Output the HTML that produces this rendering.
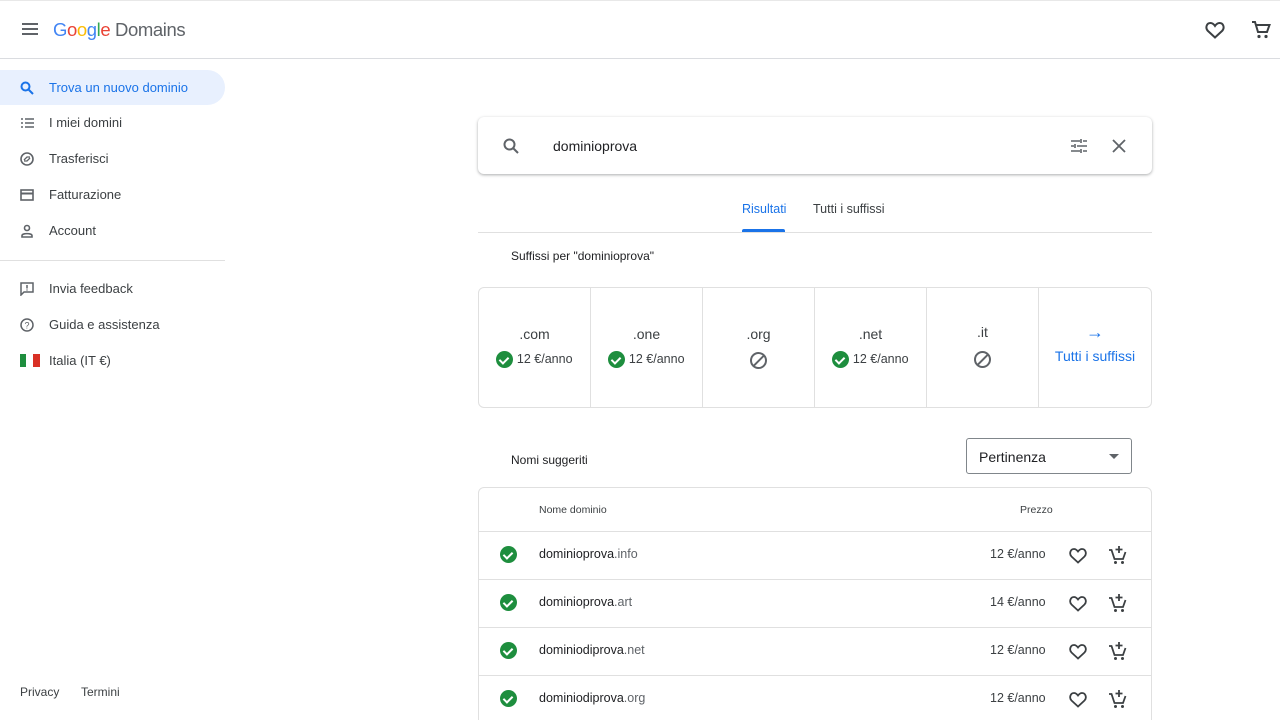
<!DOCTYPE html>
<html><head><meta charset="utf-8"><style>
*{box-sizing:border-box;margin:0;padding:0}
html,body{width:1280px;height:720px;overflow:hidden}
body{background:#fff;font-family:"Liberation Sans",sans-serif;color:#3c4043;position:relative}
.abs{position:absolute}
.hdr{left:0;top:0;width:1280px;height:59px;border-bottom:1px solid #dadce0;border-top:1px solid #e8e8e8}
.nav{left:0;width:225px;height:35px;font-size:13px;display:flex;align-items:center;padding-left:20px}
.nav svg{margin-right:15px}
.tld{position:absolute;top:0;height:119px;width:112px;border-right:1px solid #e0e0e0;text-align:center;font-size:14px}
.row{left:479px;width:672px;height:48px;border-top:1px solid #e0e0e0;font-size:12.5px}
.ok{display:inline-block;width:17px;height:17px;border-radius:50%;background:#1e8e3e;vertical-align:middle;position:relative}
.ok:after{content:"";position:absolute;left:5px;top:3.5px;width:4px;height:7px;border:solid #fff;border-width:0 2px 2px 0;transform:rotate(45deg)}
.no{display:inline-block;width:17px;height:17px;border:2px solid #5f6368;border-radius:50%;position:relative}
.no:after{content:"";position:absolute;left:5.5px;top:-1px;width:2px;height:15px;background:#5f6368;transform:rotate(45deg)}
</style></head><body>
<div class="abs hdr"></div>
<svg class="abs" style="left:21px;top:22px" width="18" height="14"><path d="M1 2h16M1 7h16M1 12h16" stroke="#5f6368" stroke-width="2"/></svg>
<div class="abs" style="left:53px;top:19px;font-size:18.5px;letter-spacing:-.4px"><span style="color:#4285f4">G</span><span style="color:#ea4335">o</span><span style="color:#fbbc05">o</span><span style="color:#4285f4">g</span><span style="color:#34a853">l</span><span style="color:#ea4335">e</span> <span style="color:#5f6368">Domains</span></div>
<svg class="abs" style="left:1205px;top:21px" width="20" height="18"><path d="M10 16.5L3 10C0 7 1.5 2 5.5 2c2 0 3.5 1.5 4.5 3 1-1.5 2.5-3 4.5-3 4 0 5.5 5 2.5 8z" fill="none" stroke="#3c4043" stroke-width="2"/></svg>
<svg class="abs" style="left:1251px;top:20px" width="20" height="20"><path d="M1 2h3l3 10h9l2.5-7H5.5" fill="none" stroke="#3c4043" stroke-width="2"/><circle cx="8" cy="16.5" r="1.6" fill="#3c4043"/><circle cx="15" cy="16.5" r="1.6" fill="#3c4043"/></svg>

<div class="abs" style="left:0;top:70px;width:225px;height:35px;background:#e8f0fe;border-radius:0 18px 18px 0"></div>
<div class="abs nav" style="top:70px;color:#1a73e8"><svg width="14" height="14"><circle cx="5.5" cy="5.5" r="4" fill="none" stroke="#1a73e8" stroke-width="2"/><path d="M8.5 8.5L13 13" stroke="#1a73e8" stroke-width="2"/></svg>Trova un nuovo dominio</div>
<div class="abs nav" style="top:105px"><svg width="14" height="14"><path d="M1 3h2M5 3h9M1 7h2M5 7h9M1 11h2M5 11h9" stroke="#5f6368" stroke-width="1.6"/></svg>I miei domini</div>
<div class="abs nav" style="top:141px"><svg width="14" height="14"><circle cx="7" cy="7" r="6" fill="none" stroke="#5f6368" stroke-width="1.6"/><path d="M4 8l3-3h3M10 6l-3 3H4" stroke="#5f6368" stroke-width="1.3" fill="none"/></svg>Trasferisci</div>
<div class="abs nav" style="top:177px"><svg width="14" height="14"><rect x="1" y="2" width="12" height="10" fill="none" stroke="#5f6368" stroke-width="1.6"/><path d="M1 5.5h12" stroke="#5f6368" stroke-width="2"/></svg>Fatturazione</div>
<div class="abs nav" style="top:213px"><svg width="14" height="14"><circle cx="7" cy="4" r="2.5" fill="none" stroke="#5f6368" stroke-width="1.6"/><path d="M2 13v-1.5C2 9 12 9 12 11.5V13z" fill="none" stroke="#5f6368" stroke-width="1.6"/></svg>Account</div>
<div class="abs" style="left:0;top:260px;width:225px;border-top:1px solid #e0e0e0"></div>
<div class="abs nav" style="top:271px"><svg width="14" height="14"><path d="M1 1h12v9H4l-3 3z" fill="none" stroke="#5f6368" stroke-width="1.5"/><path d="M7 3v3.5M7 7.5v1" stroke="#5f6368" stroke-width="1.5"/></svg>Invia feedback</div>
<div class="abs nav" style="top:307px"><svg width="14" height="14"><circle cx="7" cy="7" r="6" fill="none" stroke="#5f6368" stroke-width="1.5"/><text x="7" y="10.5" font-size="9" text-anchor="middle" fill="#5f6368" font-family="Liberation Sans">?</text></svg>Guida e assistenza</div>
<div class="abs nav" style="top:343px"><svg width="20" height="13" style="margin-right:9px"><rect width="6" height="13" fill="#1e8e3e"/><rect x="13" width="7" height="13" fill="#d93025"/></svg>Italia (IT €)</div>
<div class="abs" style="left:20px;top:685px;font-size:12px">Privacy</div>
<div class="abs" style="left:81px;top:685px;font-size:12px">Termini</div>

<div class="abs" style="left:478px;top:117px;width:674px;height:57px;border-radius:6px;box-shadow:0 1px 3px rgba(60,64,67,.3),0 1px 2px rgba(60,64,67,.15)"></div>
<svg class="abs" style="left:503px;top:138px" width="16" height="16"><circle cx="6.5" cy="6.5" r="5" fill="none" stroke="#5f6368" stroke-width="2"/><path d="M10 10l5 5" stroke="#5f6368" stroke-width="2"/></svg>
<div class="abs" style="left:553px;top:138px;font-size:14px;color:#202124">dominioprova</div>
<svg class="abs" style="left:1070px;top:138px" width="18" height="16"><path d="M1 3h9M13 3h4M1 8h3M7 8h10M1 13h9M13 13h4M11 1v4M5 6v4M11 11v4" stroke="#5f6368" stroke-width="1.6"/></svg>
<svg class="abs" style="left:1112px;top:139px" width="14" height="14"><path d="M1 1l12 12M13 1L1 13" stroke="#5f6368" stroke-width="1.8"/></svg>

<div class="abs" style="left:742px;top:202px;font-size:12.5px;color:#1a73e8">Risultati</div>
<div class="abs" style="left:742px;top:229px;width:43px;height:3px;background:#1a73e8;border-radius:2px 2px 0 0"></div>
<div class="abs" style="left:813px;top:202px;font-size:12.5px">Tutti i suffissi</div>
<div class="abs" style="left:478px;top:232px;width:674px;border-top:1px solid #e0e0e0"></div>
<div class="abs" style="left:511px;top:249px;font-size:12px;color:#202124">Suffissi per "dominioprova"</div>

<div class="abs" style="left:478px;top:287px;width:674px;height:121px;border:1px solid #e0e0e0;border-radius:6px;overflow:hidden">
<div class="tld" style="left:0"><div style="margin-top:38px">.com</div><div style="margin-top:9px;font-size:12.5px"><span class="ok"></span> 12 €/anno</div></div>
<div class="tld" style="left:112px"><div style="margin-top:38px">.one</div><div style="margin-top:9px;font-size:12.5px"><span class="ok"></span> 12 €/anno</div></div>
<div class="tld" style="left:224px"><div style="margin-top:38px">.org</div><div style="margin-top:10px"><span class="no"></span></div></div>
<div class="tld" style="left:336px"><div style="margin-top:38px">.net</div><div style="margin-top:9px;font-size:12.5px"><span class="ok"></span> 12 €/anno</div></div>
<div class="tld" style="left:448px"><div style="margin-top:36px">.it</div><div style="margin-top:11px"><span class="no"></span></div></div>
<div class="tld" style="left:560px;border:0;color:#1a73e8"><div style="margin-top:34px;font-size:18px">→</div><div style="margin-top:5px">Tutti i suffissi</div></div>
</div>

<div class="abs" style="left:511px;top:453px;font-size:12px;color:#202124">Nomi suggeriti</div>
<div class="abs" style="left:966px;top:438px;width:166px;height:36px;border:1px solid #80868b;border-radius:3px;font-size:14px;padding:10px 12px;color:#202124">Pertinenza</div>
<svg class="abs" style="left:1109px;top:454px" width="10" height="5"><path d="M0 0h10L5 5z" fill="#5f6368"/></svg>

<div class="abs" style="left:478px;top:487px;width:674px;height:260px;border:1px solid #e0e0e0;border-radius:6px"></div>
<div class="abs" style="left:539px;top:504px;font-size:10.5px">Nome dominio</div>
<div class="abs" style="left:1020px;top:504px;font-size:10.5px">Prezzo</div>

<div class="abs row" style="top:531px"></div>
<div class="abs row" style="top:579px"></div>
<div class="abs row" style="top:627px"></div>
<div class="abs row" style="top:675px"></div>

<div id="rows"></div>
<script>
var d=[["dominioprova",".info","12",555],["dominioprova",".art","14",603],["dominiodiprova",".net","12",651],["dominiodiprova",".org","12",699]];
var h="";d.forEach(function(r){var y=r[3];
h+='<span class="ok" style="position:absolute;left:500px;top:'+(y-9)+'px"></span>';
h+='<div class="abs" style="left:539px;top:'+(y-8)+'px;font-size:12.5px"><span style="color:#202124">'+r[0]+'</span><span style="color:#5f6368">'+r[1]+'</span></div>';
h+='<div class="abs" style="left:990px;top:'+(y-8)+'px;font-size:12.5px">'+r[2]+' €/anno</div>';
h+='<svg class="abs" style="left:1069px;top:'+(y-8)+'px" width="18" height="17"><path d="M9 15.5L2.5 9.5C0 7 1.2 2 5 2c1.8 0 3 1.2 4 2.5C10 3.2 11.2 2 13 2c3.8 0 5 5 2.5 7.5z" fill="none" stroke="#3c4043" stroke-width="1.8"/></svg>';
h+='<svg class="abs" style="left:1108px;top:'+(y-10)+'px" width="19" height="20"><path d="M1 5h2.5l3 9h8.5l2.5-7" fill="none" stroke="#3c4043" stroke-width="1.8"/><path d="M11 1v7M7.5 4.5h7" stroke="#3c4043" stroke-width="1.8"/><circle cx="7.5" cy="17.5" r="1.5" fill="#3c4043"/><circle cx="14.5" cy="17.5" r="1.5" fill="#3c4043"/></svg>';
});document.getElementById("rows").innerHTML=h;
</script>
</body></html>
